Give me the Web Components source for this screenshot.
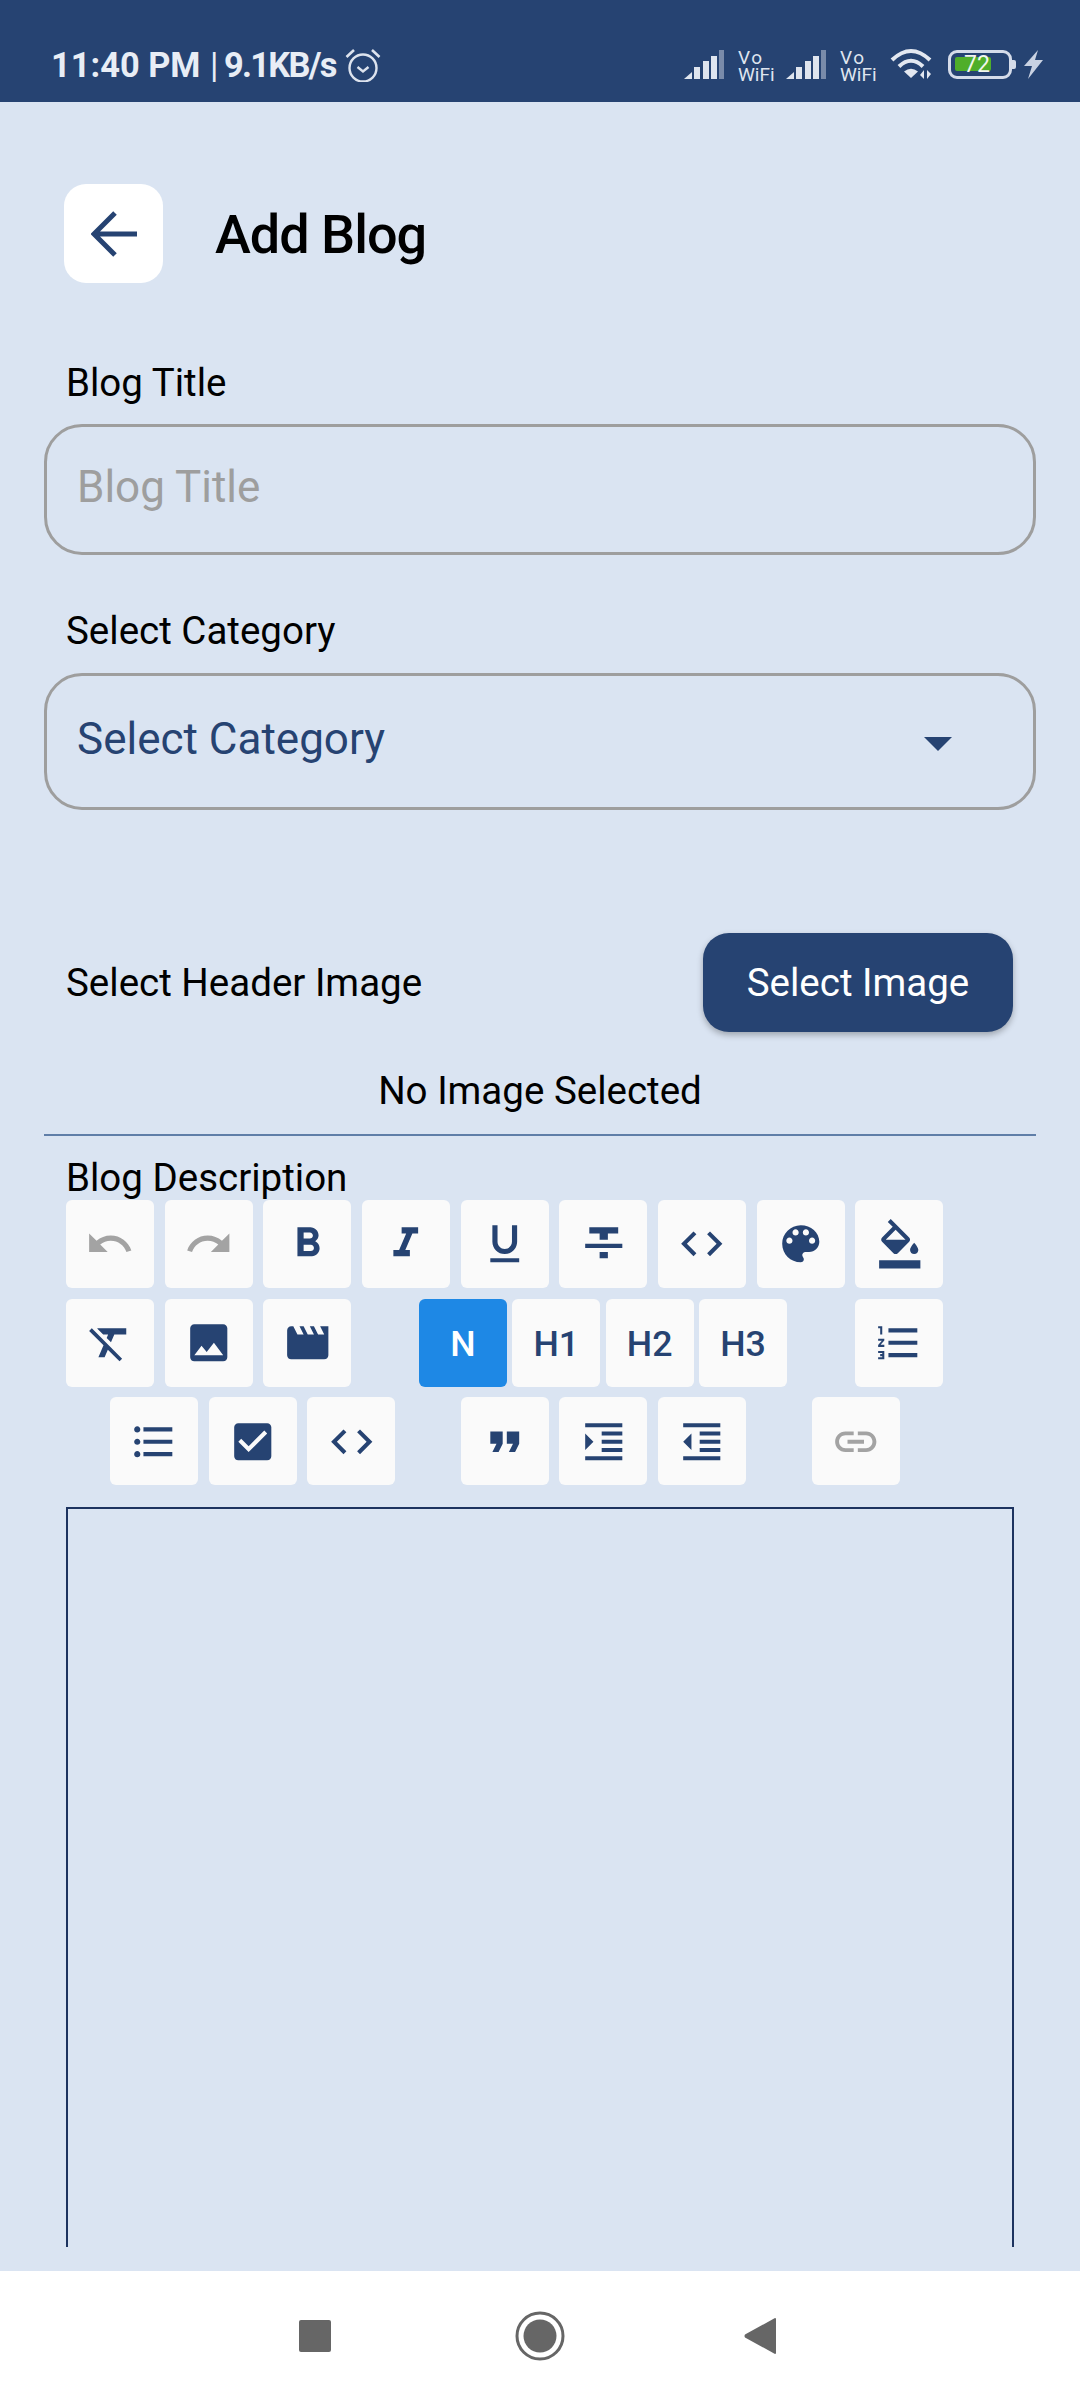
<!DOCTYPE html>
<html>
<head>
<meta charset="utf-8">
<title>Add Blog</title>
<style>
  html, body { margin: 0; padding: 0; background: #dae4f2; }
  body { font-family: Roboto, "Liberation Sans", sans-serif; }
</style>
</head>
<body>
<blog-page></blog-page>

<script>
const NAVY = '#264372';

// material icon paths used by the editor toolbar
const ICONS = {
  undo: 'M12.5 8c-2.65 0-5.05.99-6.9 2.6L2 7v9h9l-3.62-3.62c1.39-1.16 3.16-1.88 5.12-1.88 3.54 0 6.55 2.31 7.6 5.5l2.37-.78C21.08 11.03 17.15 8 12.5 8z',
  redo: 'M18.4 10.6C16.55 8.99 14.15 8 11.5 8c-4.65 0-8.58 3.03-9.96 7.22L3.9 16c1.05-3.19 4.05-5.5 7.6-5.5 1.95 0 3.73.72 5.12 1.88L13 16h9V7l-3.6 3.6z',
  bold: 'M15.6 10.79c.97-.67 1.65-1.77 1.65-2.79 0-2.26-1.75-4-4-4H7v14h7.04c2.09 0 3.71-1.7 3.71-3.79 0-1.52-.86-2.82-2.15-3.42zM10 6.5h3c.83 0 1.5.67 1.5 1.5s-.67 1.5-1.5 1.5h-3v-3zm3.5 9H10v-3h3.5c.83 0 1.5.67 1.5 1.5s-.67 1.5-1.5 1.5z',
  italic: 'M10 4v3h2.21l-3.42 8H6v3h8v-3h-2.21l3.42-8H18V4z',
  underline: 'M12 17c3.31 0 6-2.69 6-6V3h-2.5v8c0 1.93-1.57 3.5-3.5 3.5S8.5 12.93 8.5 11V3H6v8c0 3.31 2.69 6 6 6zm-7 2v2h14v-2H5z',
  strike: 'M10 19h4v-3h-4v3zM5 4v3h5v3h4V7h5V4H5zM3 14h18v-2H3v2z',
  code: 'M9.4 16.6L4.8 12l4.6-4.6L8 6l-6 6 6 6 1.4-1.4zm5.2 0l4.6-4.6-4.6-4.6L16 6l6 6-6 6-1.4-1.4z',
  palette: 'M12 3c-4.97 0-9 4.03-9 9s4.03 9 9 9c.83 0 1.5-.67 1.5-1.5 0-.39-.15-.74-.39-1.01-.23-.26-.38-.61-.38-.99 0-.83.67-1.5 1.5-1.5H16c2.76 0 5-2.24 5-5 0-4.42-4.03-8-9-8zm-5.5 9c-.83 0-1.5-.67-1.5-1.5S5.67 9 6.5 9 8 9.67 8 10.5 7.33 12 6.5 12zm3-4C8.67 8 8 7.33 8 6.5S8.67 5 9.5 5s1.5.67 1.5 1.5S10.33 8 9.5 8zm5 0c-.83 0-1.5-.67-1.5-1.5S13.67 5 14.5 5s1.5.67 1.5 1.5S15.33 8 14.5 8zm3 4c-.83 0-1.5-.67-1.5-1.5S16.67 9 17.5 9s1.5.67 1.5 1.5-.67 1.5-1.5 1.5z',
  fill: 'M16.56 8.94L7.62 0 6.21 1.41l2.38 2.38-5.15 5.15c-.59.59-.59 1.54 0 2.12l5.5 5.5c.29.29.68.44 1.06.44s.77-.15 1.06-.44l5.5-5.5c.59-.58.59-1.53 0-2.12zM5.21 10L10 5.21 14.79 10H5.21zM19 11.5s-2 2.17-2 3.5c0 1.1.9 2 2 2s2-.9 2-2c0-1.33-2-3.5-2-3.5zM2 20h20v4H2v-4z',
  clear: 'M3.27 5L2 6.27l6.97 6.97L6.5 19h3l1.57-3.66L16.73 21 18 19.73 3.55 5.27 3.27 5zM6 5v.18L8.82 8h2.4l-.72 1.68 2.1 2.1L14.21 8H20V5H6z',
  image: 'M21 19V5c0-1.1-.9-2-2-2H5c-1.1 0-2 .9-2 2v14c0 1.1.9 2 2 2h14c1.1 0 2-.9 2-2zM8.5 13.5l2.5 3.01L14.5 12l4.5 6H5l3.5-4.5z',
  movie: 'M18 4l2 4h-3l-2-4h-2l2 4h-3l-2-4H8l2 4H7L5 4H4c-1.1 0-1.99.9-1.99 2L2 18c0 1.1.9 2 2 2h16c1.1 0 2-.9 2-2V4h-4z',
  numbered: 'M2 17h2v.5H3v1h1v.5H2v1h3v-4H2v1zm1-9h1V4H2v1h1v3zm-1 3h1.8L2 13.1v.9h3v-1H3.2L5 10.9V10H2v1zm5-6v2h14V5H7zm0 14h14v-2H7v2zm0-6h14v-2H7v2z',
  bulleted: 'M4 10.5c-.83 0-1.5.67-1.5 1.5s.67 1.5 1.5 1.5 1.5-.67 1.5-1.5-.67-1.5-1.5-1.5zm0-6c-.83 0-1.5.67-1.5 1.5S3.17 7.5 4 7.5 5.5 6.83 5.5 6 4.83 4.5 4 4.5zm0 12c-.83 0-1.5.68-1.5 1.5s.68 1.5 1.5 1.5 1.5-.68 1.5-1.5-.67-1.5-1.5-1.5zM7 19h14v-2H7v2zm0-6h14v-2H7v2zm0-8v2h14V5H7z',
  check: 'M19 3H5c-1.11 0-2 .9-2 2v14c0 1.1.89 2 2 2h14c1.11 0 2-.9 2-2V5c0-1.1-.89-2-2-2zm-9 14l-5-5 1.41-1.41L10 14.17l7.59-7.59L19 8l-9 9z',
  quote: 'M6 17h3l2-4V7H5v6h3zm8 0h3l2-4V7h-6v6h3z',
  indent: 'M3 21h18v-2H3v2zM3 8v8l4-4-4-4zm8 9h10v-2H11v2zM3 3v2h18V3H3zm8 6h10V7H11v2zm0 4h10v-2H11v2z',
  outdent: 'M11 17h10v-2H11v2zm-8-5l4 4V8l-4 4zm0 9h18v-2H3v2zM3 3v2h18V3H3zm8 6h10V7H11v2zm0 4h10v-2H11v2z',
  link: 'M3.9 12c0-1.71 1.39-3.1 3.1-3.1h4V7H7c-2.76 0-5 2.24-5 5s2.24 5 5 5h4v-1.9H7c-1.71 0-3.1-1.39-3.1-3.1zM8 13h8v-2H8v2zm9-6h-4v1.9h4c1.71 0 3.1 1.39 3.1 3.1s-1.39 3.1-3.1 3.1h-4V17h4c2.76 0 5-2.24 5-5s-2.24-5-5-5z'
};

class StatusBar extends HTMLElement {
  constructor() {
    super().attachShadow({ mode: 'open' }).innerHTML = `
      <style>
        :host { display: flex; align-items: center; height: 102px; box-sizing: border-box; padding: 28px 37px 0 51px; background: ${NAVY}; color: #e8edf5; font-family: Roboto, sans-serif; }
        .clock { font-size: 34.4px; font-weight: 700; line-height: 40px; white-space: nowrap; }
        .clock i { font-style: normal; font-weight: 400; margin: 0 -3px 0 1px; }
        .clock span { letter-spacing: -1.7px; }
        .alarm { margin-left: 9px; margin-top: -1px; }
        .right { margin-left: auto; margin-top: -2px; display: flex; align-items: center; }
        .vo { width: 36px; margin: 3px 12px 0 14px; font-size: 19px; line-height: 17px; color: #dfe5ef; white-space: nowrap; }
        .vo span { display: block; }
        .vo span:first-child { font-size: 19px; letter-spacing: 1.5px; }
        .wifi { margin-left: 2px; }
        .battery { position: relative; margin-left: 16px; width: 64px; height: 29px; box-sizing: border-box; border: 3.5px solid #d5dcea; border-radius: 9px; }
        .battery b { position: absolute; left: 4px; top: 4px; width: 36px; height: 14px; background: #4fae2a; border-radius: 2px; }
        .battery span { position: absolute; left: 4px; top: 0; width: 44px; text-align: center; font-size: 23px; line-height: 23px; font-weight: 400; color: #f2f6ee; }
        .nub { width: 4px; height: 9px; margin-right: 8px; background: #d5dcea; border-radius: 0 2px 2px 0; }
      </style>
      <div class="clock">11:40 PM <i>|</i> <span>9.1KB/s</span></div>
      <svg class="alarm" width="36" height="35" viewBox="0 0 36 35" fill="none" stroke="#dde3ee">
        <circle cx="18" cy="21" r="13.500" stroke-width="2.4"/>
        <path d="M12.500 20l5.500 4.500 5.500-4.500" stroke-width="2.4"/>
        <path d="M1.500 10L9 3M34.500 10L27 3" stroke-width="2.6"/>
      </svg>
      <div class="right">
        ${this.signal()}
        <div class="vo"><span>Vo</span><span>WiFi</span></div>
        ${this.signal()}
        <div class="vo"><span>Vo</span><span>WiFi</span></div>
        <svg class="wifi" width="42" height="32" viewBox="0 0 42 32" fill="none" stroke="#e3e8f1" stroke-width="4">
          <path d="M2 12Q21-6 40 12M9 18.5Q21 7 33 18.5"/>
          <path d="M14 23.5Q21 18 28 23.5L21 30z" fill="#e3e8f1" stroke="none"/>
          <path d="M34 22v9l-4-4zM37 22v9l4-5z" fill="#e3e8f1" stroke="none"/>
        </svg>
        <div class="battery"><b></b><span>72</span></div>
        <div class="nub"></div>
        <svg width="19" height="29" viewBox="0 0 19 29"><path d="M14 0L0 16h8L4 29 19 10h-8z" fill="#c9d2e2"/></svg>
      </div>
    `
  }

  signal() {
    return `<svg width="40" height="29" viewBox="0 0 40 29" fill="#dfe5ef">
      <path d="M0 29l8-7v7z"/><rect x="10" y="17" width="6" height="12"/><rect x="19" y="11" width="6" height="18"/>
      <rect x="27" y="6" width="6" height="23"/><rect x="35" y="0" width="5" height="29" opacity=".45"/>
    </svg>`
  }
}

class BackHeader extends HTMLElement {
  constructor() {
    super().attachShadow({ mode: 'open' }).innerHTML = `
      <style>
        :host { display: flex; align-items: center; height: 99px; padding-left: 20px; }
        .back { width: 99px; height: 99px; display: flex; align-items: center; justify-content: center; background: #fff; border-radius: 22px; }
        h1 { margin: 2px 0 0 52px; font-size: 54px; font-weight: 500; letter-spacing: -1px; line-height: 60px; color: #000; }
      </style>
      <div class="back">
        <svg width="46" height="46" viewBox="0 0 46 46" fill="none" stroke="${NAVY}" stroke-width="5">
          <path d="M46 23H3M24 2L3 23l21 21"/>
        </svg>
      </div>
      <h1><slot></slot></h1>
    `
  }
}

class FormField extends HTMLElement {
  constructor() {
    super().attachShadow({ mode: 'open' }).innerHTML = `
      <style>
        :host { display: block; }
        label { display: block; margin-left: 22px; font-size: 38.5px; line-height: 45px; color: #000; }
        .box { display: flex; align-items: center; justify-content: space-between; box-sizing: border-box; margin-top: var(--box-gap, 19px); padding: 0 81px 0 30px; height: var(--box-height, 131px); border: 3px solid #9e9e9e; border-radius: 38px; font-size: 44px; line-height: 52px; color: var(--box-color, #9e9e9e); }
        .box span { margin-bottom: var(--text-lift, 6px); }
        svg { flex: none; margin-top: 4px; }
      </style>
      <label></label>
      <div class="box"><span><slot></slot></span></div>
    `
    this.shadowRoot.querySelector('label').innerText = this.getAttribute('label');
    if (this.hasAttribute('dropdown')) {
      this.shadowRoot.querySelector('.box').insertAdjacentHTML('beforeend',
        `<svg width="28" height="14" viewBox="0 0 28 14"><path d="M0 0h28L14 14z" fill="${NAVY}"/></svg>`);
    }
  }
}

class ImagePicker extends HTMLElement {
  constructor() {
    super().attachShadow({ mode: 'open' }).innerHTML = `
      <style>
        :host { display: block; color: #000; font-size: 38.5px; line-height: 45px; }
        .row { display: flex; align-items: center; justify-content: space-between; height: 99px; padding: 0 23px 0 22px; }
        button { height: 99px; width: 310px; padding: 0; border: 0; border-radius: 26px; background: ${NAVY}; color: #fff; font: inherit; box-shadow: 0 3px 6px rgba(0, 0, 0, .28); }
        .none { margin-top: 36px; text-align: center; }
        hr { height: 2px; margin: 21px 0 0; border: 0; background: #5f7ea8; }
      </style>
      <div class="row"><span>Select Header Image</span><button>Select Image</button></div>
      <div class="none">No Image Selected</div>
      <hr>
    `
  }
}

class ToolButton extends HTMLElement {
  constructor() {
    super().attachShadow({ mode: 'open' }).innerHTML = `
      <style>
        :host { display: flex; align-items: center; justify-content: center; flex: none; box-sizing: border-box; width: 88px; height: 88px; border-radius: 6px; background: #fafafa; color: ${NAVY}; font-size: 35.75px; font-weight: 500; }
        :host(:not([icon])) { padding-top: 2px; }
        :host([off]) { color: #a3a3a3; }
        :host([active]) { background: #1e88e5; color: #fff; }
        svg { width: 49.5px; height: 49.5px; fill: currentColor; }
      </style>
      <slot></slot>
    `
    const icon = this.getAttribute('icon');
    if (icon) {
      this.shadowRoot.innerHTML += `<svg viewBox="0 0 24 24"><path d="${ICONS[icon]}"/></svg>`;
    }
  }
}

class ToolRow extends HTMLElement {
  constructor() {
    super().attachShadow({ mode: 'open' }).innerHTML = `
      <style>
        :host { display: flex; gap: 10.67px; }
        :host([inset]) { padding-left: 44px; --divider: 44.2px; }
      </style>
      <slot></slot>
    `
  }
}

class ToolDivider extends HTMLElement {
  constructor() {
    super().attachShadow({ mode: 'open' }).innerHTML = `
      <style>:host { display: block; flex: none; width: var(--divider, 46.4px); }</style>
    `
  }
}

class ToolGroup extends HTMLElement {
  constructor() {
    super().attachShadow({ mode: 'open' }).innerHTML = `
      <style>:host { display: flex; gap: 5.33px; }</style>
      <slot></slot>
    `
  }
}

class EditorToolbar extends HTMLElement {
  constructor() {
    super().attachShadow({ mode: 'open' }).innerHTML = `
      <style>:host { display: flex; flex-direction: column; gap: 10.67px; padding-left: 22px; }</style>
      <slot></slot>
    `
  }
}

class NavBar extends HTMLElement {
  constructor() {
    super().attachShadow({ mode: 'open' }).innerHTML = `
      <style>
        :host { display: flex; justify-content: center; align-items: center; box-sizing: border-box; height: 129px; padding-right: 5px; background: #fff; }
        svg { display: block; fill: #666; }
      </style>
      <svg width="32" height="32" viewBox="0 0 32 32" style="margin-right:184px"><rect width="32" height="32" rx="2"/></svg>
      <svg width="50" height="50" viewBox="0 0 50 50" style="margin-right:179px"><circle cx="25" cy="25" r="23" fill="none" stroke="#666" stroke-width="3"/><circle cx="25" cy="25" r="16.500"/></svg>
      <svg width="32" height="36" viewBox="0 0 32 36"><path d="M31 0q1 0 1 1v34q0 1-1 1L1 19.500q-1-1.500 0-3z"/></svg>
    `
  }
}

class BlogPage extends HTMLElement {
  constructor() {
    super().attachShadow({ mode: 'open' }).innerHTML = `
      <style>
        :host { display: block; width: 1080px; height: 2400px; overflow: hidden; background: #dae4f2; font-family: Roboto, sans-serif; }
        main { height: 2145px; box-sizing: border-box; padding: 82px 44px 0; overflow: hidden; }
        back-header { margin-bottom: 77px; }
        .second { margin-top: 53px; --box-gap: 20px; --box-height: 137px; --box-color: ${NAVY}; --text-lift: 5px; }
        image-picker { margin-top: 123px; }
        .desc { margin: 20px 0 0 22px; font-size: 38.5px; line-height: 44px; color: #000; }
        .editor { height: 1000px; margin: 22px 22px 0 22px; border: 2px solid #1d3360; }
        nav-bar { margin-top: 24px; }
      </style>
      <status-bar></status-bar>
      <main>
        <back-header>Add Blog</back-header>
        <form-field label="Blog Title">Blog Title</form-field>
        <form-field class="second" label="Select Category" dropdown>Select Category</form-field>
        <image-picker></image-picker>
        <div class="desc">Blog Description</div>
        <editor-toolbar>
          <tool-row>
            <tool-button icon="undo" off></tool-button>
            <tool-button icon="redo" off></tool-button>
            <tool-button icon="bold"></tool-button>
            <tool-button icon="italic"></tool-button>
            <tool-button icon="underline"></tool-button>
            <tool-button icon="strike"></tool-button>
            <tool-button icon="code"></tool-button>
            <tool-button icon="palette"></tool-button>
            <tool-button icon="fill"></tool-button>
          </tool-row>
          <tool-row>
            <tool-button icon="clear"></tool-button>
            <tool-button icon="image"></tool-button>
            <tool-button icon="movie"></tool-button>
            <tool-divider></tool-divider>
            <tool-group>
              <tool-button active>N</tool-button>
              <tool-button>H1</tool-button>
              <tool-button>H2</tool-button>
              <tool-button>H3</tool-button>
            </tool-group>
            <tool-divider></tool-divider>
            <tool-button icon="numbered"></tool-button>
          </tool-row>
          <tool-row inset>
            <tool-button icon="bulleted"></tool-button>
            <tool-button icon="check"></tool-button>
            <tool-button icon="code"></tool-button>
            <tool-divider></tool-divider>
            <tool-button icon="quote"></tool-button>
            <tool-button icon="indent"></tool-button>
            <tool-button icon="outdent"></tool-button>
            <tool-divider></tool-divider>
            <tool-button icon="link" off></tool-button>
          </tool-row>
        </editor-toolbar>
        <div class="editor"></div>
      </main>
      <nav-bar></nav-bar>
    `
  }
}

customElements.define('status-bar', StatusBar);
customElements.define('back-header', BackHeader);
customElements.define('form-field', FormField);
customElements.define('image-picker', ImagePicker);
customElements.define('tool-button', ToolButton);
customElements.define('tool-row', ToolRow);
customElements.define('tool-divider', ToolDivider);
customElements.define('tool-group', ToolGroup);
customElements.define('editor-toolbar', EditorToolbar);
customElements.define('nav-bar', NavBar);
customElements.define('blog-page', BlogPage);
</script>
</body>
</html>
